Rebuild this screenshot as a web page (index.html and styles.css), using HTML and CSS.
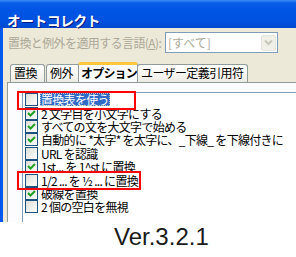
FILE: index.html
```html
<!DOCTYPE html>
<html lang="ja">
<head>
<meta charset="utf-8">
<link rel="stylesheet" href="styles.css">
</head>
<body>
<div class="shot">
  <div class="win">
    <div class="titlebar"><span class="title">オートコレクト</span></div>
    <div class="body">
      <div class="langrow">
        <span class="lbl">置換と例外を適用する言語(<u>A</u>):</span>
        <div class="combo">
          <span class="val">[すべて]</span>
          <span class="drop"><svg width="9" height="7" viewBox="0 0 9 7"><path d="M1 1.5 L4.5 5 L8 1.5" fill="none" stroke="#c9c7ba" stroke-width="2"/></svg></span>
        </div>
      </div>
      <div class="tabs">
        <span class="tab t1">置換</span>
        <span class="tab t2">例外</span>
        <span class="tab sel">オプション</span>
        <span class="tab t4">ユーザー定義引用符</span>
      </div>
      <div class="panel">
        <div class="list">
          <div class="row"><span class="cb"></span><span class="txt focus">置換表を使う</span></div>
          <div class="row"><span class="cb on"><svg width="11" height="11" viewBox="0 0 11 11"><path d="M2 5 L4.5 7.5 L9 3" fill="none" stroke="#21a121" stroke-width="2"/></svg></span><span class="txt">2 文字目を小文字にする</span></div>
          <div class="row"><span class="cb on"><svg width="11" height="11" viewBox="0 0 11 11"><path d="M2 5 L4.5 7.5 L9 3" fill="none" stroke="#21a121" stroke-width="2"/></svg></span><span class="txt">すべての文を大文字で始める</span></div>
          <div class="row"><span class="cb on"><svg width="11" height="11" viewBox="0 0 11 11"><path d="M2 5 L4.5 7.5 L9 3" fill="none" stroke="#21a121" stroke-width="2"/></svg></span><span class="txt">自動的に *太字* を太字に、_下線_ を下線付きに</span></div>
          <div class="row"><span class="cb"></span><span class="txt">URL を認識</span></div>
          <div class="row"><span class="cb on"><svg width="11" height="11" viewBox="0 0 11 11"><path d="M2 5 L4.5 7.5 L9 3" fill="none" stroke="#21a121" stroke-width="2"/></svg></span><span class="txt">1st... を 1^st に置換</span></div>
          <div class="row"><span class="cb"></span><span class="txt">1/2 ... を ½ ... に置換</span></div>
          <div class="row"><span class="cb on"><svg width="11" height="11" viewBox="0 0 11 11"><path d="M2 5 L4.5 7.5 L9 3" fill="none" stroke="#21a121" stroke-width="2"/></svg></span><span class="txt">破線を置換</span></div>
          <div class="row"><span class="cb"></span><span class="txt">2 個の空白を無視</span></div>
        </div>
      </div>
    </div>
    <div class="mark m1"></div>
    <div class="mark m2"></div>
  </div>
  <div class="ver">Ver.3.2.1</div>
</div>
</body>
</html>
```
FILE: styles.css
```css
html, body { margin: 0; padding: 0; background: #fff; }
.shot { width: 296px; height: 257px; overflow: hidden; font-family: "Noto Sans CJK JP", sans-serif; }
.win { position: relative; height: 222px; overflow: hidden; background: #ece9d8; }
.titlebar {
  height: 28px;
  background: linear-gradient(#3b8cf7 0, #0a5ee6 3px, #0055e5 10px, #0052e0 20px, #0048d0 28px);
  padding: 7px 0 0 7px; box-sizing: border-box;
}
.title { color: #fff; font-weight: bold; font-size: 13.5px; line-height: 14px; letter-spacing: -0.2px; text-shadow: 1px 1px 0 #0a1a80; }
.body { border-left: 3px solid #0058ee; height: 194px; box-sizing: border-box; }
.langrow { display: flex; align-items: center; padding: 4px 0 0 5px; height: 21px; }
.lbl { color: #aca899; font-size: 12px; line-height: 14px; width: 157px; letter-spacing: -0.6px; white-space: nowrap; }
.lbl u { text-decoration: underline; }
.combo {
  width: 113px; height: 21px; box-sizing: border-box; border: 1px solid #7f9db9; background: #fff;
  display: flex; align-items: center; justify-content: space-between; padding: 0 1px 0 2px;
}
.val { color: #aca899; font-size: 12px; line-height: 14px; }
.drop { width: 15px; height: 16px; box-sizing: border-box; background: #f0efe8; border: 1px solid #e6e5dd; border-radius: 2px; display: flex; align-items: center; justify-content: center; }
.tabs { display: flex; align-items: flex-end; margin: 9px 0 0 4px; padding-left: 3px; height: 20px; }
.tab {
  height: 18px; box-sizing: border-box; border: 1px solid #919b9c; border-bottom: none; border-radius: 3px 3px 0 0;
  background: linear-gradient(#fff, #f3f2ec 70%, #ebeae3);
  font-size: 12px; line-height: 16px; padding: 0 3px; color: #000; white-space: nowrap; letter-spacing: -0.6px;
}
.t1 { width: 35px; }
.t2 { width: 34px; margin-left: 1px; }
.sel {
  height: 20px; width: 60px; margin: 0 -1px 0 -2px; position: relative; z-index: 1;
  background: #fcfcfe; border-top: 3px solid #ffc83c; font-weight: bold; line-height: 16px; padding: 0 2px; letter-spacing: -0.8px;
}
.t4 { width: 111px; padding: 0 3px; }
.panel { margin-left: 4px; border: 1px solid #919b9c; border-right: none; background: #fcfcfe; height: 200px; padding: 9px 0 0 14px; box-sizing: border-box; }
.list { border: 1px solid #7f9db9; border-right: none; background: #fff; height: 200px; padding: 0 0 0 2px; }
.row { display: flex; align-items: center; height: 13.4px; }
.cb {
  width: 13px; height: 13px; box-sizing: border-box; border: 1px solid #1c5180; flex: none;
  background: linear-gradient(135deg, #dcdcd7, #fff); display: flex; align-items: center; justify-content: center;
}
.txt { margin-left: 2px; padding: 0 1px; font-size: 12px; line-height: 13px; letter-spacing: -0.7px; white-space: nowrap; color: #000; }
.focus { background: #316ac5; color: #fff; outline: 1px dotted #c0c0c0; outline-offset: -1px; }
.mark { position: absolute; border: 2px solid #f00; box-sizing: border-box; }
.m1 { left: 17px; top: 91px; width: 119px; height: 19px; }
.m2 { left: 17px; top: 171px; width: 124px; height: 19px; }
.ver { font-family: "Liberation Sans", Arial, sans-serif; font-size: 24px; line-height: 26px; color: #1a1a1a; padding: 2px 0 0 114px; }
```
